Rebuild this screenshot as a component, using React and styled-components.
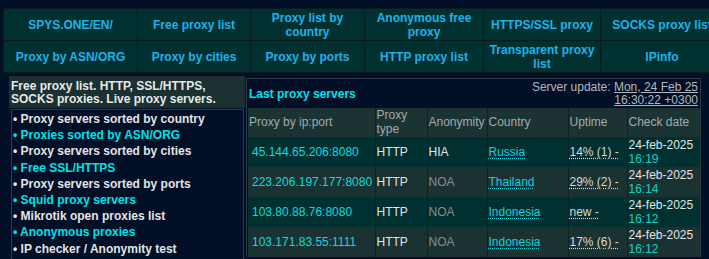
import * as React from "react"
import styled, { createGlobalStyle } from "styled-components"

const GlobalStyle = createGlobalStyle`
  html, body {
    margin: 0;
    padding: 0;
    background: #010f27;
    overflow: hidden;
  }
  body {
    font-family: "Liberation Sans", Arial, sans-serif;
    font-size: 12px;
  }
`

const Page = styled.div`
  width: 709px;
  height: 259px;
  overflow: hidden;
  padding-top: 8px;
  box-sizing: border-box;
`

const Nav = styled.nav`
  display: grid;
  grid-template-columns: 133px 112px 113px 118px 116px 122px;
  grid-auto-rows: 31px;
  gap: 1px;
  padding: 1px;
  margin-left: 3px;
  width: max-content;
  background: #0c1a1e;
`

const NavLink = styled.a`
  display: flex;
  align-items: center;
  justify-content: center;
  text-align: center;
  padding: 0 4px;
  background: #003130;
  color: #1fb2ea;
  font-weight: bold;
  line-height: 14px;
  text-decoration: none;
`

const Main = styled.div`
  display: flex;
  align-items: flex-start;
  margin-top: 3px;
  padding-left: 9px;
`

const LeftCol = styled.aside`
  width: 236px;
  flex: none;
`

const LeftHeader = styled.h1`
  margin: 0;
  padding: 4px 2px 2px 2px;
  background: #1b3030;
  color: #e8e8e8;
  font-size: 12px;
  font-weight: bold;
  line-height: 13px;
`

const MenuBox = styled.ul`
  list-style: none;
  margin: 1px 1px 0 2px;
  padding: 1px 0 20px 1px;
  border: 1px solid #2e3c44;
  border-bottom: none;
`

const MenuItem = styled.li`
  font-weight: bold;
  line-height: 16.2px;
  color: ${({ $hl }) => ($hl ? "#00e2e6" : "#e4e4e4")};
  white-space: nowrap;
`

const RightPanel = styled.section`
  width: 455px;
  box-sizing: border-box;
  margin-top: 2px;
  margin-left: 1px;
  border: 1px solid #2b3a44;
  border-bottom: none;
  padding: 0 1px;
`

const PanelHead = styled.div`
  display: flex;
  justify-content: space-between;
  align-items: center;
  height: 29px;
  padding: 0 1px 0 1px;
`

const PanelTitle = styled.h2`
  margin: 0;
  font-size: 12px;
  font-weight: bold;
  color: #00e2ea;
`

const Update = styled.div`
  text-align: right;
  line-height: 13px;
  color: #b4b8bc;
`

const UpdateLink = styled.a`
  color: #b4b8bc;
  text-decoration: underline;
`

const Table = styled.table`
  width: 452px;
  table-layout: fixed;
  border-collapse: collapse;
`

const Th = styled.th`
  height: 29px;
  padding: 0 1px;
  background: #1b3333;
  color: #a2aaaa;
  font-weight: normal;
  text-align: left;
  line-height: 13.5px;
  vertical-align: middle;
  border-left: 1px solid #0e2224;
  &:first-child {
    border-left: none;
  }
`

const Row = styled.tr`
  background: ${({ $odd }) => ($odd ? "#003130" : "#1b3232")};
`

const Td = styled.td`
  height: 30px;
  padding: 0 1px 0 ${({ $pad }) => $pad || 1}px;
  line-height: 14px;
  vertical-align: middle;
  white-space: nowrap;
  color: ${({ $color }) => $color || "#e4e4e4"};
  border-left: 1px solid #0e2224;
  &:first-child {
    border-left: none;
  }
`

const DotLink = styled.a`
  color: ${({ $color }) => $color};
  text-decoration: underline dotted;
  text-underline-offset: 2px;
`

const Time = styled.span`
  color: #12d2c6;
`

const navItems = [
  "SPYS.ONE/EN/",
  "Free proxy list",
  "Proxy list by country",
  "Anonymous free proxy",
  "HTTPS/SSL proxy",
  "SOCKS proxy list",
  "Proxy by ASN/ORG",
  "Proxy by cities",
  "Proxy by ports",
  "HTTP proxy list",
  "Transparent proxy list",
  "IPinfo",
]

const menu = [
  ["Proxy servers sorted by country", false],
  ["Proxies sorted by ASN/ORG", true],
  ["Proxy servers sorted by cities", false],
  ["Free SSL/HTTPS", true],
  ["Proxy servers sorted by ports", false],
  ["Squid proxy servers", true],
  ["Mikrotik open proxies list", false],
  ["Anonymous proxies", true],
  ["IP checker / Anonymity test", false],
]

const proxies = [
  { ip: "45.144.65.206:8080", type: "HTTP", anon: "HIA", country: "Russia", uptime: "14% (1) -", time: "16:19" },
  { ip: "223.206.197.177:8080", type: "HTTP", anon: "NOA", country: "Thailand", uptime: "29% (2) -", time: "16:14" },
  { ip: "103.80.88.76:8080", type: "HTTP", anon: "NOA", country: "Indonesia", uptime: "new -", time: "16:12" },
  { ip: "103.171.83.55:1111", type: "HTTP", anon: "NOA", country: "Indonesia", uptime: "17% (6) -", time: "16:12" },
]

export default function App() {
  return (
    <Page>
      <GlobalStyle />
      <Nav>
        {navItems.map(label => (
          <NavLink key={label} href="#">
            {label}
          </NavLink>
        ))}
      </Nav>
      <Main>
        <LeftCol>
          <LeftHeader>
            Free proxy list. HTTP, SSL/HTTPS,
            <br />
            SOCKS proxies. Live proxy servers.
          </LeftHeader>
          <MenuBox>
            {menu.map(([text, hl]) => (
              <MenuItem key={text} $hl={hl}>
                • {text}
              </MenuItem>
            ))}
          </MenuBox>
        </LeftCol>
        <RightPanel>
          <PanelHead>
            <PanelTitle>Last proxy servers</PanelTitle>
            <Update>
              Server update: <UpdateLink href="#">Mon, 24 Feb 25</UpdateLink>
              <br />
              <UpdateLink href="#">16:30:22 +0300</UpdateLink>
            </Update>
          </PanelHead>
          <Table>
            <colgroup>
              <col style={{ width: 127 }} />
              <col style={{ width: 52 }} />
              <col style={{ width: 60 }} />
              <col style={{ width: 81 }} />
              <col style={{ width: 59 }} />
              <col style={{ width: 73 }} />
            </colgroup>
            <thead>
              <tr>
                <Th>Proxy by ip:port</Th>
                <Th>
                  Proxy
                  <br />
                  type
                </Th>
                <Th>Anonymity</Th>
                <Th>Country</Th>
                <Th>Uptime</Th>
                <Th>Check date</Th>
              </tr>
            </thead>
            <tbody>
              {proxies.map((p, i) => (
                <Row key={p.ip} $odd={i % 2 === 0}>
                  <Td $pad={4} $color="#11d8de">{p.ip}</Td>
                  <Td>{p.type}</Td>
                  <Td $color={p.anon === "HIA" ? "#e4e4e4" : "#8a8c8c"}>{p.anon}</Td>
                  <Td>
                    <DotLink href="#" $color="#14d0dc">{p.country}</DotLink>
                  </Td>
                  <Td>
                    <DotLink href="#" $color="#d8d8d8">{p.uptime}</DotLink>
                  </Td>
                  <Td>
                    24-feb-2025
                    <br />
                    <Time>{p.time}</Time>
                  </Td>
                </Row>
              ))}
            </tbody>
          </Table>
        </RightPanel>
      </Main>
    </Page>
  )
}
